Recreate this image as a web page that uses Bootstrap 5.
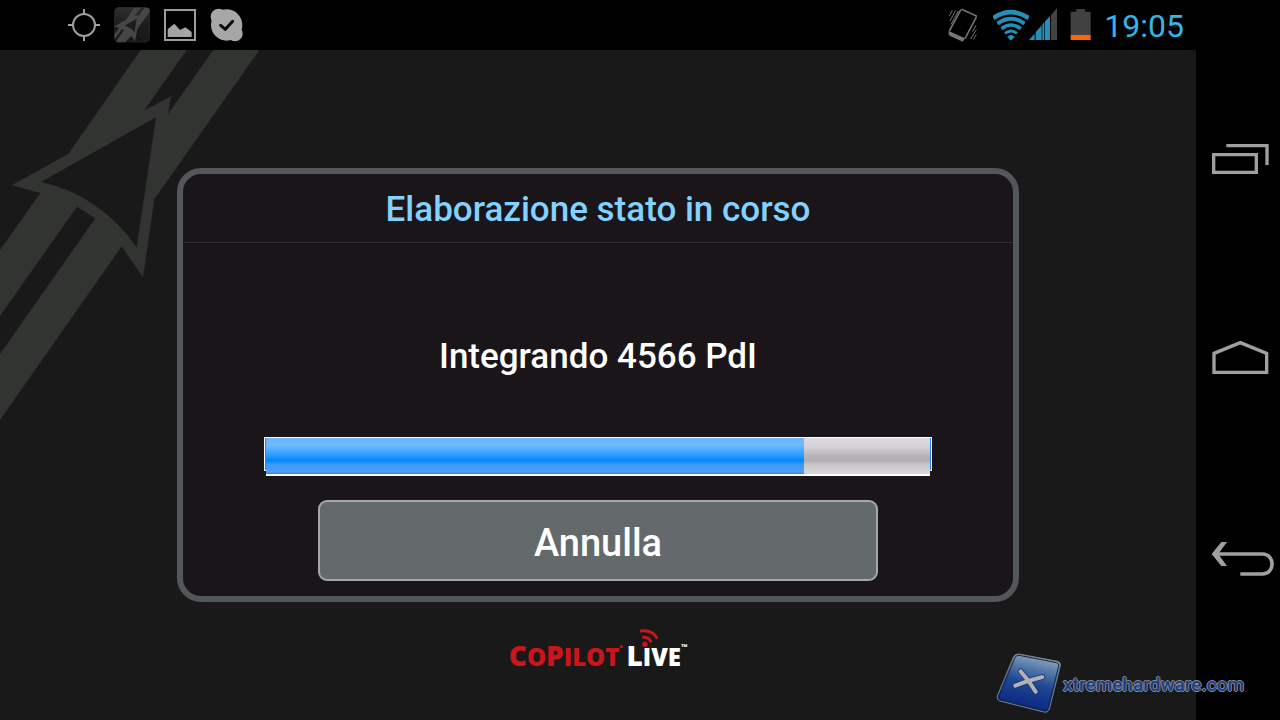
<!DOCTYPE html>
<html lang="it">
<head>
<meta charset="utf-8">
<meta name="viewport" content="width=device-width, initial-scale=1">
<title>CoPilot Live</title>
<link href="https://cdn.jsdelivr.net/npm/bootstrap@5.3.0/dist/css/bootstrap.min.css" rel="stylesheet">
<style>
body { background: #191919; color: #fff; font-family: Roboto, "Liberation Sans", sans-serif; }
svg { display: block; flex: none; }
.status { height: 50px; padding: 0 96px 0 68px; background: #000; }
.tray { gap: 14px; }
.clock { font-size: 32px; line-height: 40px; color: #33b5e5; margin-top: 2px; }
.decor { left: 0; top: 0; }
.stage { padding: 118px 16px 30px; }
.dialog { width: 100%; max-width: 842px; border: 6px solid #53565b; border-radius: 24px; background: #1a1519; }
.dialog h1 { font-size: 35px; line-height: 44px; font-weight: 500; color: #82d2ff; padding: 14px 16px 10px; border-bottom: 1px solid #2f2c2e; }
.dialog-main { padding: 92px 16px 15px; }
.message { font-size: 35px; line-height: 44px; font-weight: 500; margin-bottom: 58px; }
.meter { width: 100%; max-width: 668px; height: 39px; padding: 1px 2px 0; margin-bottom: 24px; }
.meter::before { content: ""; position: absolute; inset: 0 0 5px; border: 1px solid #fff; background: #2a80f0; }
.meter .progress { height: 38px; border-radius: 0; border-bottom: 2px solid #fff; position: relative;
  background: linear-gradient(#dddbdd, #d4d2d4 25%, #b7b4b7 50%, #b1aeb1 63%, #c9c7c9 75%, #d9d7d9); }
.meter .progress-bar { background: linear-gradient(#6cb5ff, #70bbff 20%, #2a9cff 48%, #0088ff 63%, #3f98ff 74%, #4e9fff 94%, #3b7ee8); }
.btn-cancel { width: 100%; max-width: 560px; height: 81px; font-size: 38px; line-height: 52px; font-weight: 500; color: #fff; background: #64696b; border: 2px solid #a4a8aa; border-radius: 9px; padding: 4px 0 0; }
.btn-cancel:hover { color: #fff; background: #70757a; border-color: #a4a8aa; }
.brand-row { margin-top: 31px; font-family: "Open Sans", sans-serif; font-weight: 800; font-size: 28px; line-height: 44px; gap: 4px; }
.brand-row .sc { font-size: 24px; text-transform: uppercase; }
.brand-row sup { font-size: 8px; top: -16px; line-height: 0; }
.brand-red { color: #cb151b; }
.waves { left: 12px; top: -5px; }
.keys { width: 84px; background: #000; padding: 10px 0 60px; }
.keys button { background: none; border: 0; padding: 0; flex: 1 1 0; }
.site-mark { right: 36px; bottom: 6px; gap: 1px; }
.site-mark a { font-size: 19px; line-height: 28px; font-weight: 500; color: #173d86; text-decoration: none; padding-top: 4px;
  text-shadow: 1px 0 #858993, -1px 0 #858993, 0 1px #858993, 0 -1px #858993; }
</style>
</head>
<body>
<div class="min-vh-100 d-flex flex-column position-relative">
  <header class="status d-flex align-items-center justify-content-between">
    <div class="tray d-flex align-items-center">
      <svg width="32" height="34" viewBox="54 24 96 102" fill="none" stroke="#9d9d9d" stroke-width="6"><circle cx="102" cy="75" r="33"/><path d="M102 27v15M102 108v15M54 75h15M135 75h15"/></svg>
      <svg width="36" height="36" viewBox="192 20 108 108"><defs><linearGradient id="tile" x2="0" y2="1"><stop stop-color="#303030"/><stop offset=".5" stop-color="#1c1c1c"/><stop offset="1" stop-color="#181818"/></linearGradient><clipPath id="tc"><rect x="192" y="20" width="108" height="106" rx="14"/></clipPath></defs><rect x="193" y="21" width="106" height="104" rx="14" fill="url(#tile)" stroke="#2c2c2c" stroke-width="2"/><g clip-path="url(#tc)"><path fill="#454747" fill-rule="evenodd" d="M252 22h20l-18 26 10-5-1 7 21-28h16v10l-38 55-7 36-10-16-22 20h-28l27-38-6-3-22 31v-16l13-18-14-5 35-20ZM223 76l37-21-6 41q-12-16-31-20Z"/></g></svg>
      <svg width="32" height="34" viewBox="342 24 96 102"><rect x="345" y="30" width="90" height="90" fill="none" stroke="#9d9d9d" stroke-width="6"/><path fill="#a5a5a5" d="M353 111V88l20-17 17 19 16-8 19 14v15Z"/></svg>
      <svg width="34" height="34" viewBox="484 24 102 102"><g fill="#a7a7a7"><circle cx="534" cy="75" r="47"/><circle cx="510" cy="50" r="24"/><circle cx="559" cy="101" r="23"/></g><path d="M516 76l14 12 22-24" fill="none" stroke="#080808" stroke-width="9" stroke-linecap="round" stroke-linejoin="round"/></svg>
    </div>
    <div class="d-flex align-items-center">
      <svg width="29" height="34" viewBox="60 24 87 102" fill="none" stroke="#707070" stroke-width="5"><path d="M101 28l44 20q1 1 0 3l-34 65M99 28L64 93"/><path d="M62 93l49 22-7 10-39-18q-5-5-3-14Z" fill="#777" stroke="none"/><path d="M73 31l-9 17M83 31L66 63M91 33L69 73M144 76l-10 19M145 89l-17 28M145 104l-9 14" stroke-width="3"/></svg>
      <svg class="ms-3" width="36" height="34" viewBox="190 24 114 102" preserveAspectRatio="none" fill="none" stroke="#278fb7"><path d="M191 54Q247 19 303 54" stroke-width="14"/><path d="M204 71q43-30 86 0" stroke-width="12"/><path d="M217 86q30-22 61 0" stroke-width="11"/><path d="M228 100q19-14 38 0" stroke-width="9"/><path d="M235 110q12-10 24 0l-12 12Z" fill="#278fb7" stroke="none"/></svg>
      <svg class="me-2" width="29" height="34" viewBox="300 24 87 102"><g fill="#278fb7"><path d="M300 120l17-19v19ZM320 120V97l18-21v44ZM340 120V73l6-7v54ZM348 120V64l15-16v72Z"/></g><path fill="#444" d="M366 120V45l18-20v95Z"/></svg>
      <svg class="me-2 ms-1" width="22" height="34" viewBox="418 24 66 102"><path d="M420 105V35h17v-8h26v8h17v70Z" fill="#414141"/><path fill="#ff6500" d="M420 105h60v15h-60Z"/></svg>
      <div class="clock ms-1">19:05</div>
    </div>
  </header>

  <div class="d-flex flex-grow-1">
    <main class="stage flex-grow-1 position-relative d-flex flex-column align-items-center">
      <svg class="decor position-absolute" width="260" height="370" viewBox="0 30 780 1110" aria-hidden="true"><path fill="#323431" fill-rule="evenodd" d="M422 30H560L432 212 513 168 504 222 640 30H778L463 478 429 712 365 619 0 1140V942L285 536Q260 516 231 500L0 828V630L121 459 35 436 205 342ZM123 426L468 232 410 622Q300 465 123 426Z"/></svg>
      <section class="dialog position-relative text-center" aria-labelledby="heading">
        <h1 id="heading" class="m-0">Elaborazione stato in corso</h1>
        <div class="dialog-main d-flex flex-column align-items-center">
          <p class="message">Integrando 4566 PdI</p>
          <div class="meter position-relative">
            <div class="progress" role="progressbar" aria-label="Integrando" aria-valuenow="81" aria-valuemin="0" aria-valuemax="100">
              <div class="progress-bar" style="width: 81%"></div>
            </div>
          </div>
          <button type="button" class="btn btn-cancel">Annulla</button>
        </div>
      </section>
      <div class="brand-row d-flex">
        <span class="brand-red">C<span class="sc">o</span>P<span class="sc">ilot</span><sup>•</sup></span>
        <span class="position-relative">L<span class="sc">ive</span><sup>™</sup>
          <svg class="waves position-absolute" width="22" height="20" viewBox="445 22 66 60" fill="none" stroke="#cb151b" stroke-width="9" aria-hidden="true"><circle cx="463" cy="71" r="8" fill="#cb151b" stroke="none"/><path d="M455 50q20-2 27 15M448 31q38-5 52 23"/></svg></span>
      </div>
    </main>
    <nav class="keys d-flex flex-column" aria-label="Sistema">
      <button type="button" aria-label="Recenti"><svg width="84" height="60" viewBox="0 0 252 180" fill="none" stroke="#a0a0a0" stroke-width="10"><path d="M53 74H181V127H53ZM91 47H213V105"/></svg></button>
      <button type="button" aria-label="Home"><svg width="84" height="60" viewBox="0 0 252 180" fill="none" stroke="#a0a0a0" stroke-width="10"><path d="M54 70L133 38 212 70V127H54Z"/></svg></button>
      <button type="button" aria-label="Indietro"><svg width="84" height="60" viewBox="0 0 252 180" fill="none" stroke="#a0a0a0" stroke-width="11"><path d="M56 72H199C238 72 238 132 199 132H133"/><path d="M76 36H93L67 72 93 108H76L47 72Z" fill="#a0a0a0" stroke="none"/></svg></button>
    </nav>
  </div>

  <div class="site-mark position-absolute d-flex align-items-center">
    <svg width="66" height="62" viewBox="45 40 198 186" aria-hidden="true"><defs><linearGradient id="blue" x1=".6" x2=".35" y2="1"><stop stop-color="#93a9bd"/><stop offset=".25" stop-color="#5278a9"/><stop offset=".5" stop-color="#1d4792"/><stop offset="1" stop-color="#07207d"/></linearGradient></defs><path d="M114 46L230 68Q240 71 238 81L205 211Q201 223 188 220L57 187Q46 183 49 172L97 56Q103 44 114 46Z" fill="url(#blue)" stroke="#74808f" stroke-width="3"/><path d="M114 50L227 72Q235 74 233 83L201 208Q198 217 188 215L60 183Q51 180 54 172L101 59Q105 49 114 50Z" fill="none" stroke="#18243d" stroke-width="3"/><path d="M119 98Q146 128 164 159M184 115Q137 127 103 141" fill="none" stroke="#17346e" stroke-width="17" stroke-linecap="round"/><path d="M119 98Q146 128 164 159M184 115Q137 127 103 141" fill="none" stroke="#aeb2b8" stroke-width="12" stroke-linecap="round"/></svg>
    <a href="#">xtremehardware.com</a>
  </div>
</div>
<script src="https://cdn.jsdelivr.net/npm/bootstrap@5.3.0/dist/js/bootstrap.bundle.min.js"></script>
</body>
</html>
